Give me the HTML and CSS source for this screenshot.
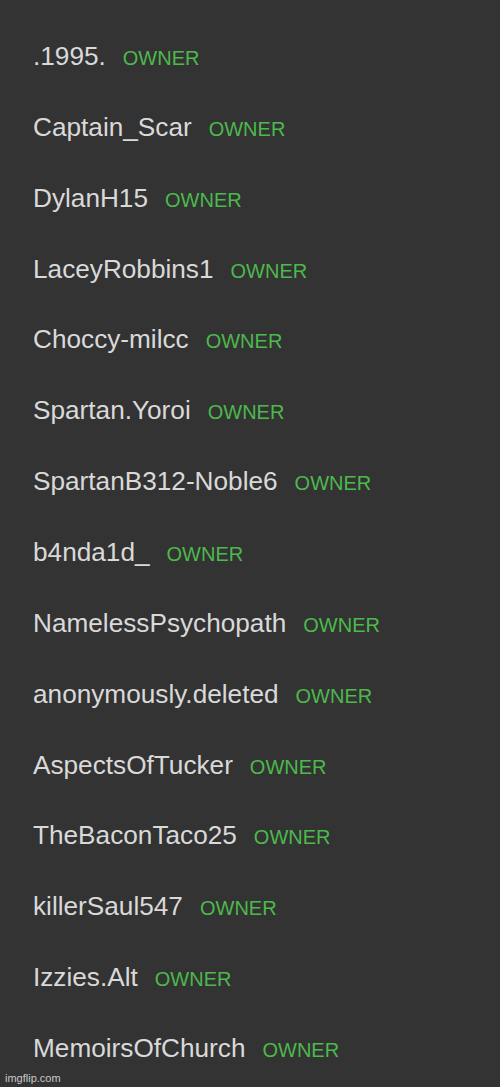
FILE: index.html
```html
<!DOCTYPE html>
<html lang="en">
<head>
    <meta charset="UTF-8">
    <meta name="viewport" content="width=device-width, initial-scale=1.0">
    <title>Members</title>
    <link rel="stylesheet" href="styles.css">
</head>
<body>
    <div class="wrap">
        <ul class="member-list">
            <li class="member"><span class="member-name">.1995.</span><span class="role">OWNER</span></li>
            <li class="member"><span class="member-name">Captain_Scar</span><span class="role">OWNER</span></li>
            <li class="member"><span class="member-name">DylanH15</span><span class="role">OWNER</span></li>
            <li class="member"><span class="member-name">LaceyRobbins1</span><span class="role">OWNER</span></li>
            <li class="member"><span class="member-name">Choccy-milcc</span><span class="role">OWNER</span></li>
            <li class="member"><span class="member-name">Spartan.Yoroi</span><span class="role">OWNER</span></li>
            <li class="member"><span class="member-name">SpartanB312-Noble6</span><span class="role">OWNER</span></li>
            <li class="member"><span class="member-name">b4nda1d_</span><span class="role">OWNER</span></li>
            <li class="member"><span class="member-name">NamelessPsychopath</span><span class="role">OWNER</span></li>
            <li class="member"><span class="member-name">anonymously.deleted</span><span class="role">OWNER</span></li>
            <li class="member"><span class="member-name">AspectsOfTucker</span><span class="role">OWNER</span></li>
            <li class="member"><span class="member-name">TheBaconTaco25</span><span class="role">OWNER</span></li>
            <li class="member"><span class="member-name">killerSaul547</span><span class="role">OWNER</span></li>
            <li class="member"><span class="member-name">Izzies.Alt</span><span class="role">OWNER</span></li>
            <li class="member"><span class="member-name">MemoirsOfChurch</span><span class="role">OWNER</span></li>
        </ul>
        <span class="watermark">imgflip.com</span>
    </div><!--wrap-->
</body>
</html>
```

FILE: styles.css
```css
*{
    margin : 0;
    padding : 0;
}
ul{
    list-style : none;
}
body{
    background-color : #333333;
    font-family : "Liberation Sans", Arial, sans-serif;
}
.wrap{
    position : relative;
    height : 1087px;
    overflow : hidden;
}
.member-list{
    padding-top : 21px;
    padding-left : 33px;
}
.member{
    display : flex;
    align-items : baseline;
    gap : 17px;
    height : 70.86px;
    line-height : 70.86px;
}
.member-name{
    font-size : 26.2px;
    color : #d9d9d9;
}
.role{
    font-size : 20px;
    color : #4cb94c;
}
.watermark{
    position : absolute;
    left : 5px;
    bottom : 3px;
    font-size : 11px;
    color : #c8c8c8;
}
```
